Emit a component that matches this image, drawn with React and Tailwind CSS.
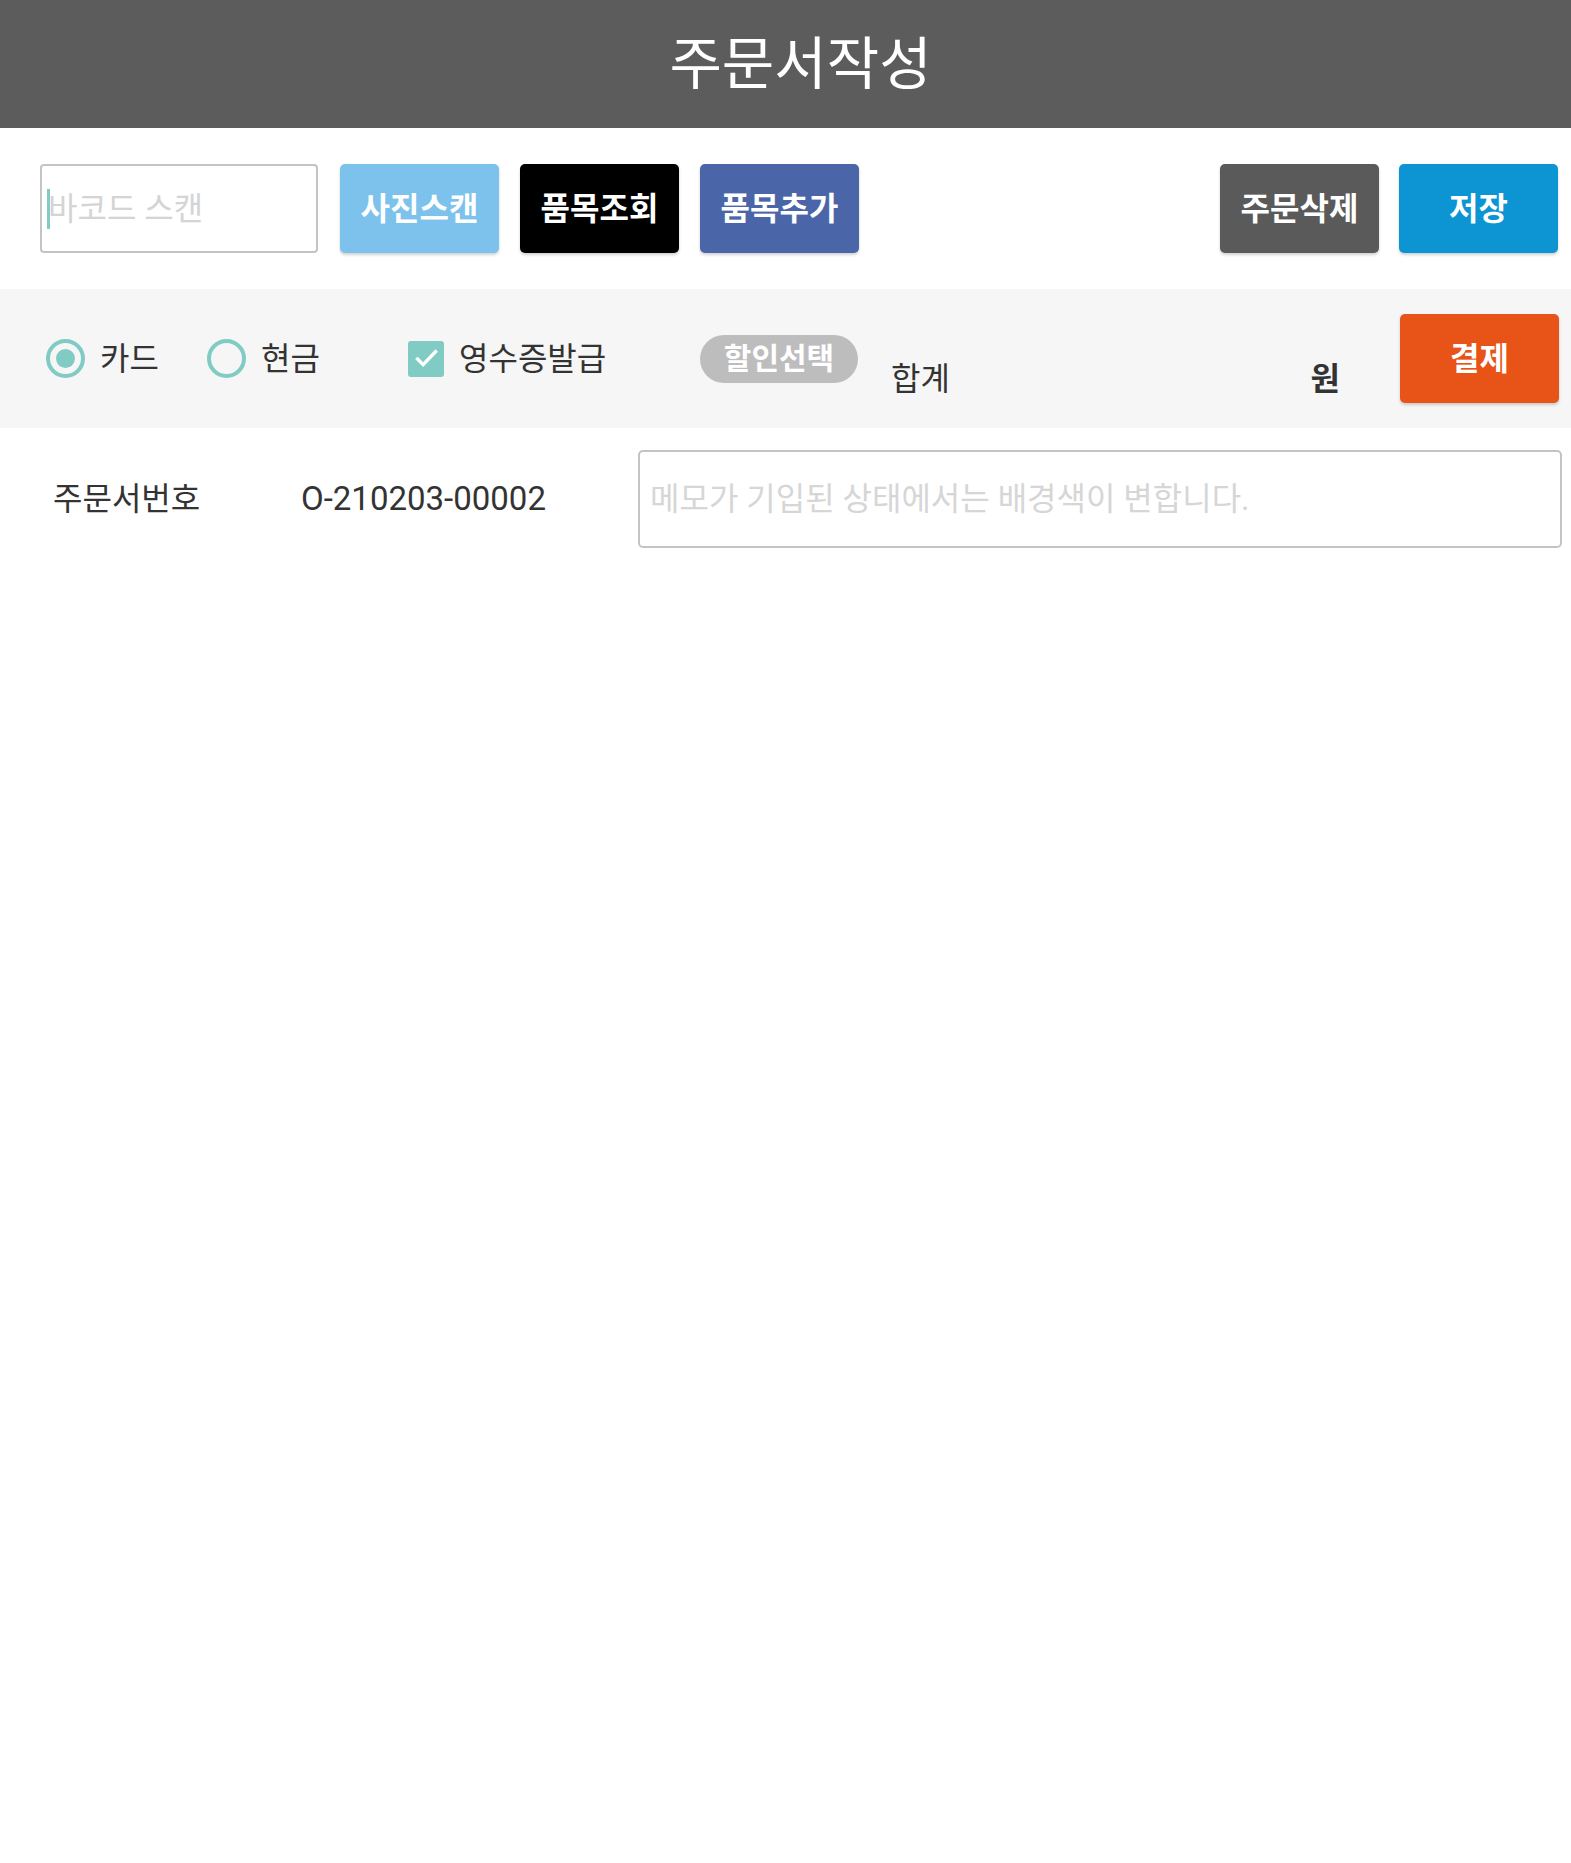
import React from 'react';

const font = "font-['Roboto','Noto_Sans_CJK_KR',sans-serif]";

const ActionButton = ({ label, className }) => (
  <button
    className={`w-[159px] h-[89px] rounded-[5px] text-white font-bold text-[32px] shadow-[0_2px_3px_rgba(0,0,0,0.18)] ${className}`}
  >
    {label}
  </button>
);

const Radio = ({ checked, label, className }) => (
  <label className={`flex items-center ${className}`}>
    <span className="w-[39px] h-[39px] rounded-full border-[4px] border-[#80cbc4] flex items-center justify-center">
      {checked && <span className="w-[19px] h-[19px] rounded-full bg-[#80cbc4]" />}
    </span>
    <span className="ml-[15px] text-[32px] text-[#333]">{label}</span>
  </label>
);

export default function App() {
  return (
    <div className={`w-[1571px] min-h-[1863px] bg-white ${font}`}>
      {/* Header */}
      <div className="h-[128px] bg-[#5c5c5c] flex items-center justify-center">
        <h1 className="text-white text-[57px] font-normal leading-none pl-[30px]">주문서작성</h1>
      </div>

      {/* Toolbar */}
      <div className="flex items-center pl-[40px] pr-[13px] py-[36px]">
        <div className="relative w-[278px] h-[89px] border-2 border-[#c4c4c4] rounded-[4px] flex items-center">
          <span className="absolute left-[5px] top-[23px] w-[3px] h-[40px] bg-[#80cbc4]" />
          <span className="ml-[6px] text-[32px] text-[#d4d4d4]">바코드 스캔</span>
        </div>
        <div className="flex gap-[21px] ml-[22px]">
          <ActionButton label="사진스캔" className="bg-[#7cc2ec]" />
          <ActionButton label="품목조회" className="bg-black" />
          <ActionButton label="품목추가" className="bg-[#4a66a8]" />
        </div>
        <div className="flex gap-[20px] ml-auto">
          <ActionButton label="주문삭제" className="bg-[#5a5a5a]" />
          <ActionButton label="저장" className="bg-[#0d95d3]" />
        </div>
      </div>

      {/* Payment row */}
      <div className="h-[139px] bg-[#f6f6f6] flex items-center pl-[46px] pr-[12px]">
        <Radio checked label="카드" className="w-[161px]" />
        <Radio label="현금" className="w-[201px]" />
        <label className="flex items-center w-[292px]">
          <span className="w-[36px] h-[36px] rounded-[3px] bg-[#80cbc4] flex items-center justify-center">
            <svg width="27" height="27" viewBox="0 0 24 24" fill="none" stroke="white" strokeWidth="3" strokeLinecap="square">
              <path d="M4 12.5l5 5L20 6" />
            </svg>
          </span>
          <span className="ml-[15px] text-[32px] text-[#333]">영수증발급</span>
        </label>
        <span className="w-[158px] h-[48px] rounded-full bg-[#bdbdbd] text-white font-bold text-[30px] flex items-center justify-center">
          할인선택
        </span>
        <span className="ml-[33px] mt-[40px] text-[32px] text-[#333]">합계</span>
        <span className="ml-auto mr-[60px] mt-[40px] text-[32px] font-semibold text-[#333]">원</span>
        <ActionButton label="결제" className="bg-[#e85418]" />
      </div>

      {/* Order info */}
      <div className="flex items-center pl-[53px] pr-[9px] pt-[22px]">
        <span className="w-[248px] text-[32px] text-[#333]">주문서번호</span>
        <span className="text-[33px] text-[#333]">O-210203-00002</span>
        <div className="ml-auto w-[924px] h-[98px] border-2 border-[#c4c4c4] rounded-[5px] flex items-center pl-[10px]">
          <span className="text-[32px] text-[#d6d6d6]">메모가 기입된 상태에서는 배경색이 변합니다.</span>
        </div>
      </div>
    </div>
  );
}
